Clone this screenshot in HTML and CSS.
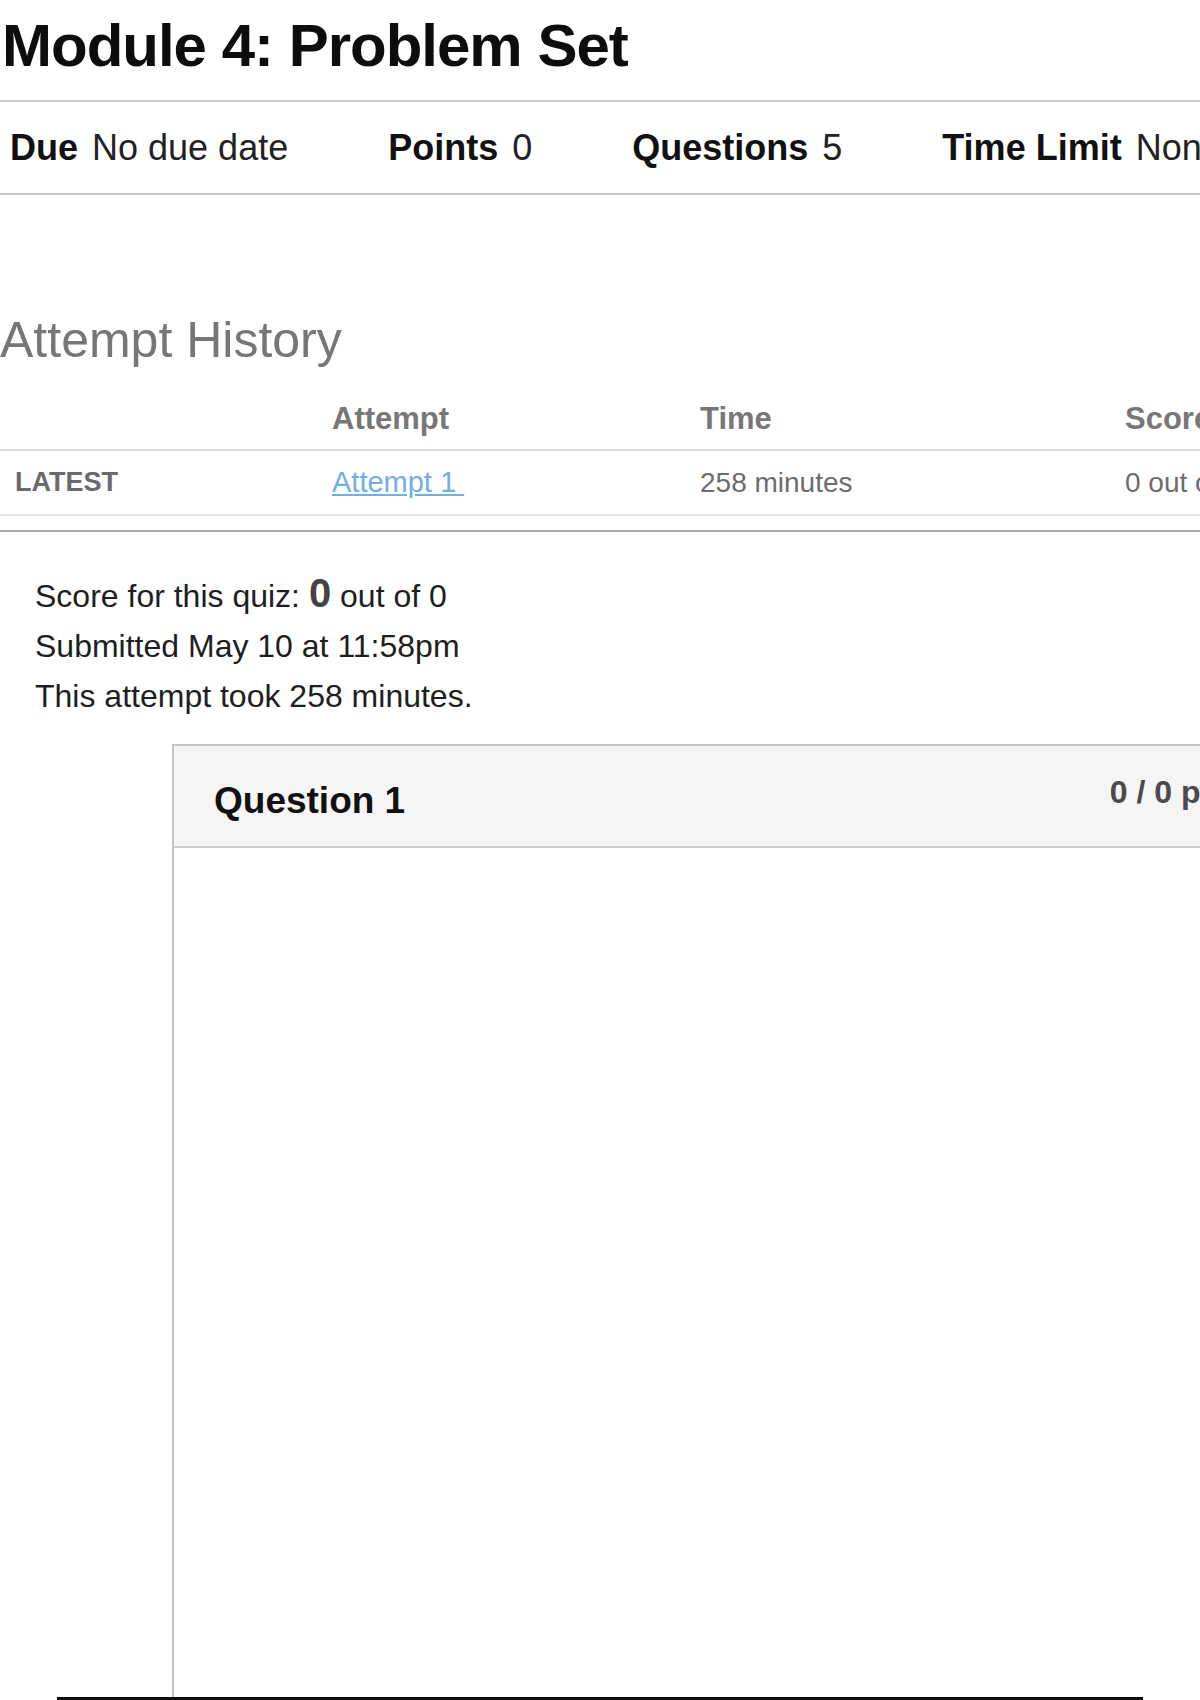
FILE: index.html
```html
<!DOCTYPE html>
<html lang="en">
<head>
<meta charset="utf-8">
<title>Module 4: Problem Set</title>
<link rel="stylesheet" href="styles.css">
</head>
<body>
<div class="page">
  <h1 class="title">Module 4: Problem Set</h1>
  <ul class="meta">
    <li class="meta-item"><span class="meta-label">Due</span><span class="meta-value">No due date</span></li>
    <li class="meta-item"><span class="meta-label">Points</span><span class="meta-value">0</span></li>
    <li class="meta-item"><span class="meta-label">Questions</span><span class="meta-value">5</span></li>
    <li class="meta-item"><span class="meta-label">Time Limit</span><span class="meta-value">None</span></li>
  </ul>

  <h2 class="history-title">Attempt History</h2>
  <div class="history">
    <div class="h-row h-head">
      <div class="cell cell-first"></div>
      <div class="cell">Attempt</div>
      <div class="cell">Time</div>
      <div class="cell">Score</div>
    </div>
    <div class="h-row h-data">
      <div class="cell cell-first latest">LATEST</div>
      <div class="cell"><a class="attempt-link" href="#">Attempt 1 </a></div>
      <div class="cell muted">258 minutes</div>
      <div class="cell muted">0 out of 0</div>
    </div>
  </div>
  <div class="rule"></div>

  <div class="summary">
    <div class="summary-line">Score for this quiz: <span class="score-big">0</span> out of 0</div>
    <div class="summary-line">Submitted May 10 at 11:58pm</div>
    <div class="summary-line">This attempt took 258 minutes.</div>
  </div>

  <div class="question">
    <div class="question-head">
      <span class="question-name">Question 1</span>
      <span class="question-pts">0 / 0 pts</span>
    </div>
    <div class="question-body"></div>
  </div>
</div>
<div class="bottom-bar"></div>
</body>
</html>
```

FILE: styles.css
```css
html {
  overflow: hidden;
}

body {
  margin: 0;
  background: #ffffff;
  font-family: "Liberation Sans", Arial, Helvetica, sans-serif;
  color: #1a1a1a;
  position: relative;
}

.page {
  width: 1400px;
}

.title {
  margin: 11px 0 19px 0;
  padding-left: 2px;
  font-size: 60px;
  line-height: 70px;
  font-weight: 700;
  letter-spacing: -1px;
  color: #0d0d0d;
}

.meta {
  list-style: none;
  margin: 0;
  padding: 0 0 0 10px;
  display: flex;
  gap: 100px;
  height: 91px;
  align-items: center;
  border-top: 2px solid #c9c9c9;
  border-bottom: 2px solid #c9c9c9;
  font-size: 36px;
  white-space: nowrap;
}

.meta-label {
  font-weight: 700;
  color: #111;
  margin-right: 14px;
}

.meta-value {
  color: #222;
}

.history-title {
  margin: 117px 0 19px 0;
  font-size: 50px;
  line-height: 57px;
  font-weight: 400;
  color: #767676;
}

.h-row {
  display: grid;
  grid-template-columns: 332px 368px 425px 300px;
  align-items: center;
  white-space: nowrap;
}

.h-head {
  height: 61px;
  border-bottom: 2px solid #dedede;
  font-size: 31px;
  font-weight: 700;
  color: #777;
}

.h-data {
  height: 63px;
  border-bottom: 2px solid #e3e3e3;
  font-size: 28px;
}

.cell-first {
  padding-left: 15px;
}

.latest {
  font-size: 27px;
  font-weight: 700;
  color: #6a6a6a;
}

.attempt-link {
  color: #72ade6;
  text-decoration: underline;
  font-size: 29px;
  white-space: pre;
}

.muted {
  color: #6c6c6c;
}

.rule {
  margin-top: 14px;
  height: 2px;
  background: #a9a9a9;
}

.summary {
  margin-top: 39px;
  padding-left: 35px;
  font-size: 32px;
  color: #1e1e1e;
}

.summary-line {
  line-height: 50px;
  height: 50px;
}

.score-big {
  font-size: 40px;
  font-weight: 700;
  color: #444;
  line-height: 1;
}

.question {
  margin-top: 23px;
  margin-left: 172px;
  width: 1099px;
  box-sizing: border-box;
  border: 2px solid #c4c4c4;
}

.question-head {
  height: 100px;
  box-sizing: content-box;
  background: #f5f5f5;
  border-bottom: 2px solid #cccccc;
  display: flex;
  justify-content: space-between;
  align-items: center;
  padding: 0 40px;
}

.question-name {
  font-size: 37px;
  font-weight: 700;
  color: #111;
  padding-top: 10px;
}

.question-pts {
  font-size: 32px;
  font-weight: 700;
  color: #4a4a4a;
  padding-bottom: 8px;
}

.question-body {
  height: 1000px;
}

.bottom-bar {
  position: absolute;
  top: 1697px;
  left: 57px;
  width: 1086px;
  height: 3px;
  background: #111;
}
```
